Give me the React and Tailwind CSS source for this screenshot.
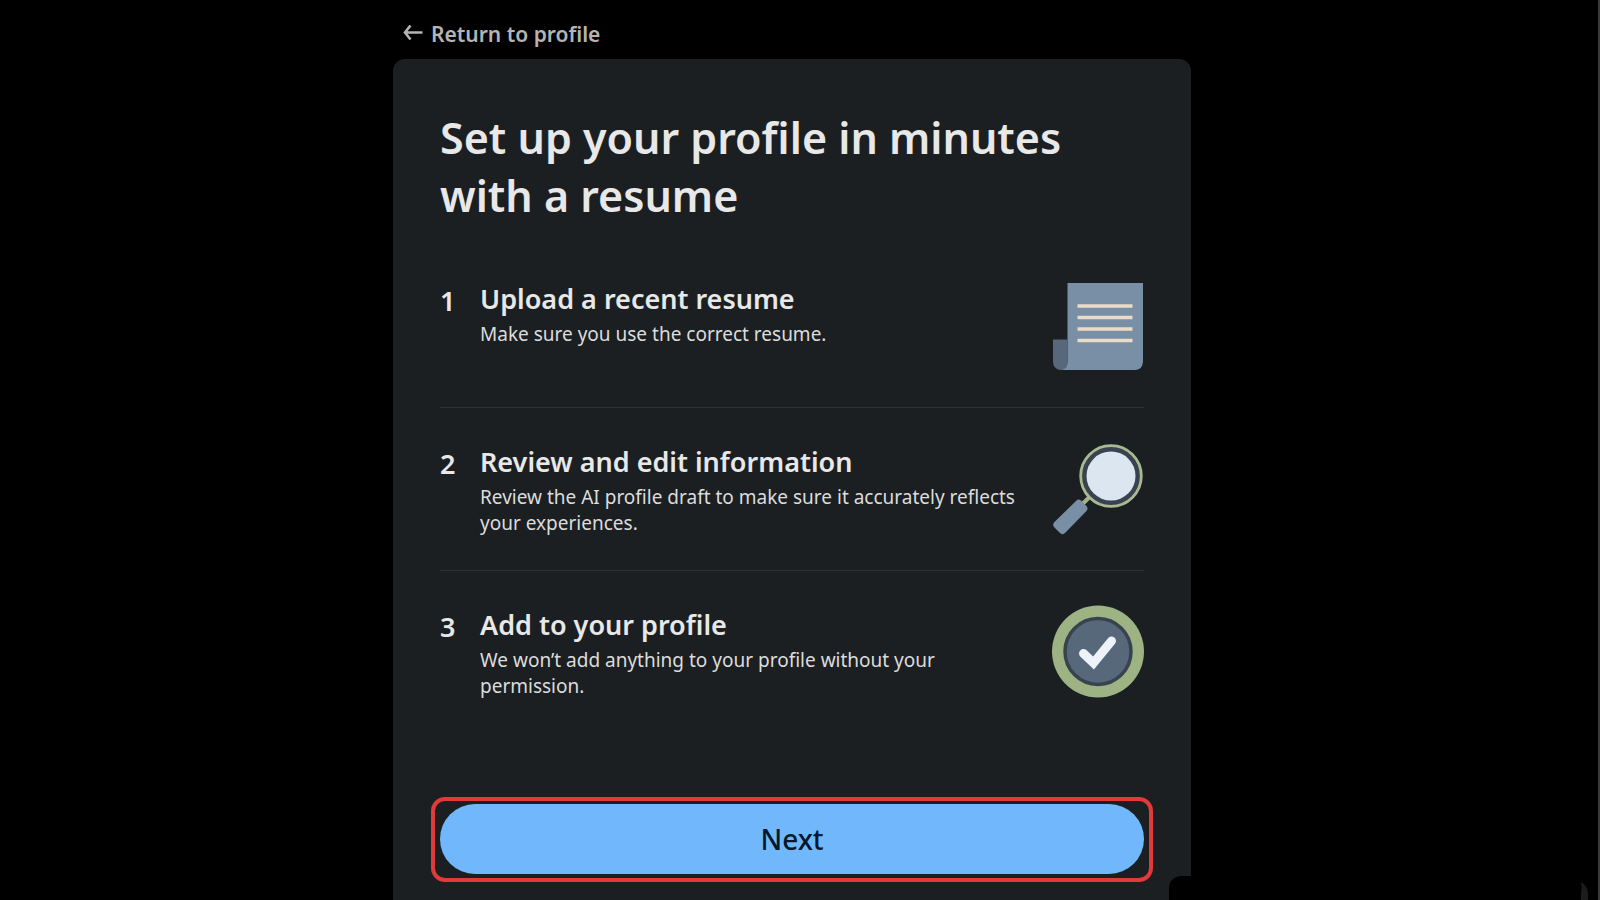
function ArrowLeft() {
  return (
    <svg className="mb-1 h-4 w-5 shrink-0" viewBox="0 0 20 16" fill="none" stroke="currentColor" strokeWidth="2.6" aria-hidden="true">
      <path d="M19.500 7.500H2.500M7.500 0.500L2 7.500L7.500 14.500" />
    </svg>
  );
}

function ResumeArt() {
  return (
    <svg className="h-23 w-23 shrink-0" viewBox="0 0 92 92" aria-hidden="true">
      <path d="M15.500 2H91V81Q90 89 83 89H8Q15.500 88 15.500 80Z" fill="#788fa5" />
      <path d="M1 58.500H15.500V81Q15.500 89 8 89Q1 88 1 80Z" fill="#56687a" />
      <path d="M25.500 25H80.500M25.500 36.500H80.500M25.500 48H80.500M25.500 59.500H80.500" stroke="#eadcc8" strokeWidth="3.600" />
    </svg>
  );
}

function MagnifierArt() {
  return (
    <svg className="h-23 w-23 shrink-0" viewBox="0 0 92 92" aria-hidden="true">
      <path d="M37.500 53L30.500 60" stroke="#a3b18a" strokeWidth="4" />
      <circle cx="59" cy="32" r="30.300" fill="#38434f" stroke="#a9b993" strokeWidth="2.800" />
      <circle cx="59" cy="32" r="24.500" fill="#dce6f1" />
      <path d="M24 57Q26.500 54.500 29 56.500L34.500 62Q36.500 64.500 34.500 67L13.500 88.500Q10.500 91.500 8 89L2 83Q0 80.500 2.500 78Z" fill="#788fa5" />
    </svg>
  );
}

function CheckArt() {
  return (
    <svg className="h-23 w-23 shrink-0 overflow-visible" viewBox="0 0 92 92" aria-hidden="true">
      <circle cx="46" cy="44.500" r="46" fill="#9eb384" />
      <circle cx="46" cy="44.500" r="33" fill="#56687a" stroke="#38434f" strokeWidth="3.500" />
      <path d="M31.500 46.500L41.500 56L59.500 34" fill="none" stroke="#edf3f8" strokeWidth="9" strokeLinecap="round" />
    </svg>
  );
}

const steps = [
  { title: "Upload a recent resume", text: "Make sure you use the correct resume.", Art: ResumeArt },
  {
    title: "Review and edit information",
    text: "Review the AI profile draft to make sure it accurately reflects your experiences.",
    Art: MagnifierArt,
  },
  {
    title: "Add to your profile",
    text: "We won’t add anything to your profile without your permission.",
    Art: CheckArt,
  },
];

export default function App() {
  return (
    <div className="flex h-screen flex-col overflow-hidden border-r-2 border-[#3a3a3a] bg-black pr-3.5 font-['Noto_Sans','Open_Sans',sans-serif] text-[#e8e8e8]">
      <main className="mx-auto flex w-full max-w-[798px] grow flex-col">
        <a href="#profile" className="mt-[17px] ml-2.5 flex h-9 items-center gap-2 self-start text-[21px] font-semibold text-[#b4b4b4]">
          <ArrowLeft />
          Return to profile
        </a>
        <section className="mt-1.5 flex grow flex-col rounded-t-xl bg-[#1b1f22] px-[47px] pt-[50px]">
          <h1 className="max-w-[640px] text-[43px] leading-[58px] font-semibold">
            Set up your profile in minutes with a resume
          </h1>
          <ol className="mt-5 divide-y divide-[#2d3134]">
            {steps.map(({ title, text, Art }, i) => (
              <li key={title} className="flex h-[163px] items-start pt-9">
                <span className="w-10 shrink-0 pt-0.5 text-[27px] leading-9 font-semibold">{i + 1}</span>
                <div className="w-[545px] min-w-0 pr-2">
                  <h2 className="text-[27px] leading-9 font-semibold">{title}</h2>
                  <p className="mt-1 text-[19px] leading-[26px] text-[#dcdcdc]">{text}</p>
                </div>
                <div className="ml-auto">
                  <Art />
                </div>
              </li>
            ))}
          </ol>
          <div className="-mx-[9px] mt-[63px] rounded-[14px] border-4 border-[#e03a3a] px-[5px] pt-[3px] pb-1">
            <button type="button" className="block h-[70px] w-full rounded-full bg-[#71b7fb] text-[28px] font-medium text-[#06182b]">
              Next
            </button>
          </div>
        </section>
      </main>
      <aside className="absolute right-2 bottom-0 flex h-6 w-[423px] justify-end rounded-tl-xl bg-black" aria-hidden="true">
        <svg className="h-6 w-3" viewBox="0 0 12 24">
          <path d="M1 6Q8 10 8 18V24H1V18Q2 10 1 6Z" fill="#1c1c1c" />
        </svg>
      </aside>
    </div>
  );
}
